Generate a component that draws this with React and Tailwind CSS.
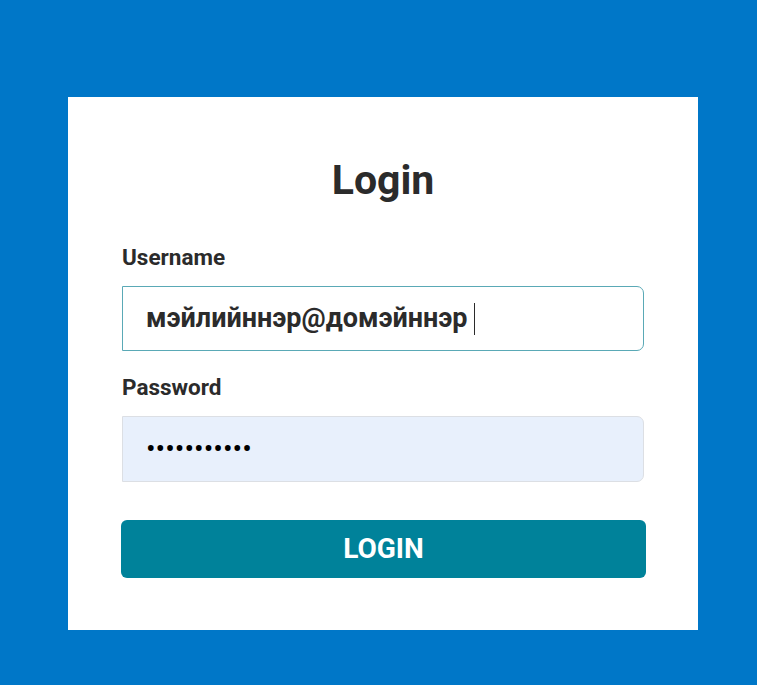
import React from "react";

export default function App() {
  return (
    <div
      className="min-h-[685px] w-full bg-[#0077c8] flex pl-[68px] pt-[97px]"
      style={{ fontFamily: "Roboto, 'Noto Sans', sans-serif" }}
    >
      <div className="w-[630px] h-[533px] bg-white px-[53px] pt-[57px]">
        {/* Title */}
        <h1 className="text-center text-[41px] leading-[52px] font-bold text-[#2b2b2b]">
          Login
        </h1>

        {/* Username */}
        <div className="mt-[37px] text-[22.5px] leading-[28px] font-bold text-[#2b2b2b] pl-[1px]">
          Username
        </div>
        <div className="mt-[15px] h-[65px] w-[522px] ml-[1px] border border-[#5aa9b6] rounded-r-[7px] flex items-center pl-[23px]">
          <span className="text-[27px] font-bold text-[#2b2b2b]">
            мэйлийннэр@домэйннэр
          </span>
          <span className="ml-[6px] h-[32px] w-[1px] bg-[#2b2b2b]" />
        </div>

        {/* Password */}
        <div className="mt-[22px] text-[22.5px] leading-[28px] font-bold text-[#2b2b2b] pl-[1px]">
          Password
        </div>
        <div className="mt-[15px] h-[66px] w-[522px] ml-[1px] border border-[#dcdfe4] bg-[#e8f0fc] rounded-r-[7px] flex items-center pl-[23px]">
          <span className="text-[28.5px] text-black">•••••••••••</span>
        </div>

        {/* Button */}
        <button className="mt-[38px] w-[525px] h-[58px] bg-[#00829a] rounded-[6px] text-white text-[28px] font-bold">
          LOGIN
        </button>
      </div>
    </div>
  );
}
